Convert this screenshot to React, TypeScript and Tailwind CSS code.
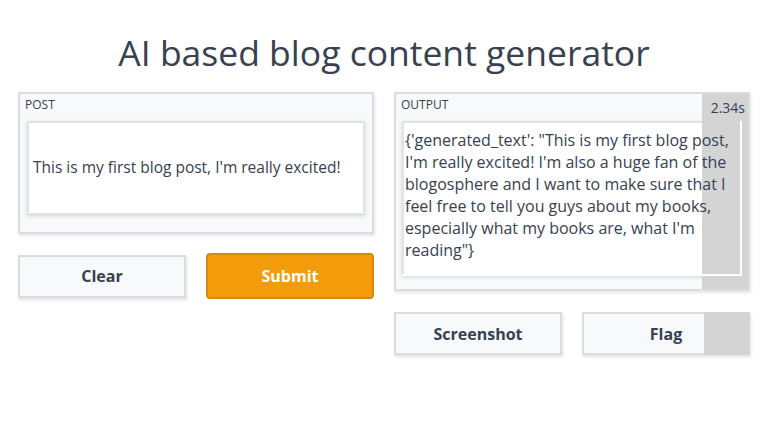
const font = { fontFamily: "'Open Sans', Lato, sans-serif" }

const output = [
    "{'generated_text': \"This is my first blog post,",
    "I'm really excited! I'm also a huge fan of the",
    "blogosphere and I want to make sure that I",
    "feel free to tell you guys about my books,",
    "especially what my books are, what I'm",
    "reading\"}",
]

function Button({ label, primary }: { label: string; primary?: boolean }) {
    return (
        <button
            className={
                primary
                    ? "h-[46px] rounded-sm border-2 border-[#d98a0b] bg-[#f39c0b] text-white font-bold text-base"
                    : "h-[43px] border-2 border-[#dcdde0] bg-[#f8f9fb] text-[#374151] font-bold text-base shadow-[1px_2px_3px_rgba(0,0,0,0.12)]"
            }
        >
            {label}
        </button>
    )
}

export default function App() {
    return (
        <div className="w-[768px] h-[443px] bg-white text-[#374151] px-[18px]" style={font}>
            <h1 className="text-[35.5px] text-center pt-[32px] pb-[20px] leading-[40px] text-[#374151]">
                AI based blog content generator
            </h1>

            <div className="grid grid-cols-2 gap-5">
                <div className="flex flex-col gap-[19px]">
                    <div className="border-2 border-[#dcdde0] bg-[#f8f9fb] px-[7px] pt-[1px] pb-[17px] shadow-[1px_2px_3px_rgba(0,0,0,0.1)]">
                        <p className="text-xs uppercase leading-[20px] mb-[6px] -ml-[2px]">Post</p>
                        <div className="h-[94px] bg-white border-2 border-[#e2e3e6] shadow-[0_1px_4px_rgba(0,0,0,0.15)] flex items-center px-[4px] text-[15.5px]">
                            This is my first blog post, I'm really excited!
                        </div>
                    </div>
                    <div className="grid grid-cols-2 gap-5 items-center">
                        <Button label="Clear" />
                        <Button label="Submit" primary />
                    </div>
                </div>

                <div className="flex flex-col gap-[21px]">
                    <div className="relative border-2 border-[#dcdde0] bg-[#f8f9fb] px-[6px] pt-[1px] pb-[13px] shadow-[1px_2px_3px_rgba(0,0,0,0.1)]">
                        <div className="absolute top-0 bottom-0 right-0 w-[46px] bg-[#d4d4d5] z-10" />
                        <p className="text-xs uppercase leading-[20px] -ml-[1px]">Output</p>
                        <span className="absolute z-20 right-[3px] top-[4px] text-sm">2.34s</span>
                        <div className="relative mt-[6px] h-[155px] bg-white border-2 border-[#e2e3e6] shadow-[0_1px_4px_rgba(0,0,0,0.15)] px-[1px] pt-[6px] text-base leading-[22px]">
                            <div className="absolute inset-0 border-r-2 border-b-2 border-white z-20 -m-[2px]" />
                            <p className="relative z-20">
                                {output.map((line) => (
                                    <span key={line} className="block whitespace-nowrap">{line}</span>
                                ))}
                            </p>
                        </div>
                    </div>
                    <div className="grid grid-cols-2 gap-5">
                        <Button label="Screenshot" />
                        <div className="relative grid">
                            <Button label="Flag" />
                            <div className="absolute top-0 bottom-0 right-0 w-[46px] bg-[#d4d4d5]" />
                        </div>
                    </div>
                </div>
            </div>
        </div>
    )
}
